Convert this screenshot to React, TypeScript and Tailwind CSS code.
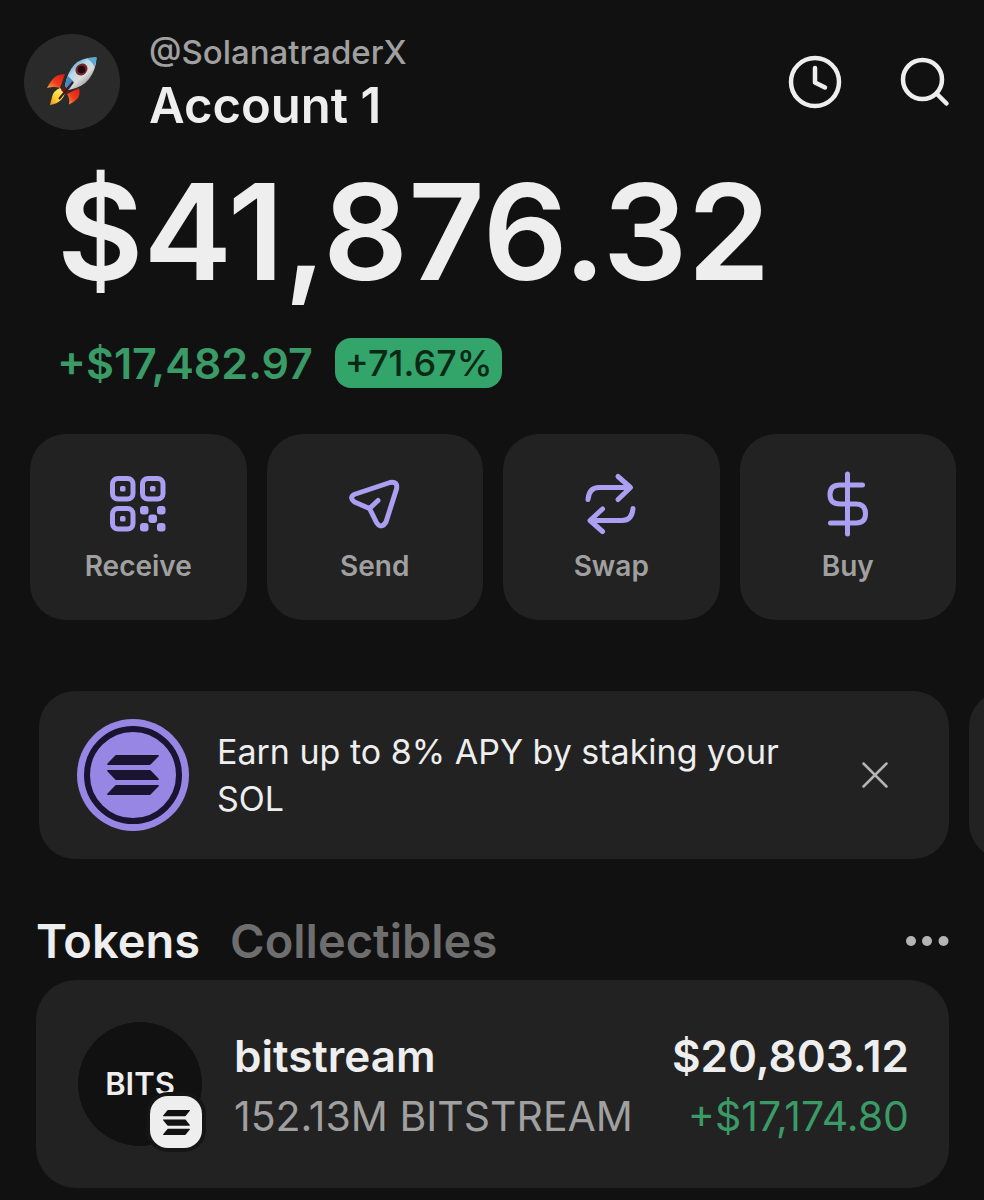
import { useState, type ReactNode } from "react";

function SolanaMark({ className }: { className?: string }) {
  return (
    <svg viewBox="0 0 52 40" preserveAspectRatio="none" className={className} fill="currentColor" aria-hidden="true">
      <path d="M9.500 0H51.200a.7.7 0 0 1 .5 1.200L43.800 9.300a2 2 0 0 1-1.400.7H.8a.7.7 0 0 1-.5-1.200L8.200.6A2 2 0 0 1 9.500 0Z" />
      <path d="M.8 15H42.500a2 2 0 0 1 1.300.6l7.900 8.200a.7.7 0 0 1-.5 1.200H9.500a2 2 0 0 1-1.300-.6L.3 16.200a.7.7 0 0 1 .5-1.200Z" />
      <path d="M9.500 30H51.200a.7.7 0 0 1 .5 1.200L43.800 39.300a2 2 0 0 1-1.400.7H.8a.7.7 0 0 1-.5-1.200L8.200 30.600A2 2 0 0 1 9.500 30Z" />
    </svg>
  );
}

function Rocket() {
  return (
    <svg viewBox="0 0 50 50" className="size-[50px]" aria-hidden="true">
      <defs>
        <linearGradient id="hull" x1="0.15" y1="0.15" x2="0.75" y2="0.85">
          <stop offset="0" stopColor="#3f8fc4" />
          <stop offset="0.35" stopColor="#b9d9ea" />
          <stop offset="0.65" stopColor="#dcdcda" />
          <stop offset="1" stopColor="#8b8f98" />
        </linearGradient>
        <linearGradient id="fin" x1="1" y1="0" x2="0" y2="1">
          <stop offset="0" stopColor="#d81c12" />
          <stop offset="0.55" stopColor="#ee3a1c" />
          <stop offset="1" stopColor="#f7a63c" />
        </linearGradient>
        <linearGradient id="flame" x1="1" y1="0" x2="0" y2="1">
          <stop offset="0" stopColor="#fff08a" />
          <stop offset="0.6" stopColor="#f9d231" />
          <stop offset="1" stopColor="#f08c22" />
        </linearGradient>
      </defs>
      <path d="M18 17 Q9 17 5 23 Q2 27 0 31 Q7 29 13 31 Z" fill="url(#fin)" />
      <path d="M32 31 Q34 38 30 42 Q26 46 22 47.500 Q23 41 20 37 Z" fill="url(#fin)" />
      <path d="M13 31 Q6 34 5 40 L3 48 Q10 47 14 43 Q17 40 18 36 Z" fill="url(#flame)" />
      <path d="M17 29 L23 34 L19 38 L14 33 Z" fill="#5a1f1c" />
      <path d="M49.500 0.500 Q34 0 27 8 Q20 16 18 29 L22 33 Q36 30 42 22 Q49 13 49.500 0.500 Z" fill="url(#hull)" />
      <path d="M49.500 0.500 Q44 0 39.500 1.500 Q45 4 47.500 10 Q49.500 5 49.500 0.500 Z" fill="#5aa9d6" />
      <path d="M18 29 Q18.500 24 21 19 L27 25 L22 33 Z" fill="#3d8cc9" />
      <ellipse cx="34.500" cy="12.500" rx="6.500" ry="5.500" transform="rotate(-45 34.500 12.500)" fill="#7d2229" />
      <circle cx="34.500" cy="12.500" r="3.800" fill="#1d0d10" />
      <path d="M26 25 L12 42" stroke="#4a1512" strokeWidth="2" />
    </svg>
  );
}

function ClockIcon() {
  return (
    <svg viewBox="0 0 54 54" className="size-[54px]" fill="none" stroke="currentColor" strokeWidth="4.500" strokeLinecap="round" strokeLinejoin="round" aria-hidden="true">
      <circle cx="27" cy="27" r="24" />
      <path d="M27 13v14.500l10 5" />
    </svg>
  );
}

function SearchIcon() {
  return (
    <svg viewBox="0 0 50 50" className="size-[50px]" fill="none" stroke="currentColor" strokeWidth="4.500" strokeLinecap="round" aria-hidden="true">
      <circle cx="22.500" cy="22.500" r="19.500" />
      <path d="M36.500 36.500l10 10" />
    </svg>
  );
}

function QrIcon() {
  return (
    <svg viewBox="0 0 68 68" className="size-[68px]" fill="currentColor" aria-hidden="true">
      {[[8.500, 8.500], [38.500, 8.500], [8.500, 38.500]].map(([x, y]) => (
        <g key={`${x}-${y}`}>
          <rect x={x} y={y} width="20.500" height="20.500" rx="5.500" fill="none" stroke="currentColor" strokeWidth="5" />
          <rect x={x + 7.500} y={y + 7.500} width="5.500" height="5.500" rx="1.500" />
        </g>
      ))}
      {[[36, 36], [53, 36], [44.500, 44.500], [36, 53], [53, 53]].map(([x, y]) => (
        <rect key={`${x}-${y}`} x={x} y={y} width="8.500" height="8.500" rx="3" />
      ))}
    </svg>
  );
}

function LineIcon({ children }: { children: ReactNode }) {
  return (
    <svg viewBox="0 0 68 68" className="size-[68px]" fill="none" stroke="currentColor" strokeWidth="5" strokeLinecap="round" strokeLinejoin="round" aria-hidden="true">
      {children}
    </svg>
  );
}

const actions = [
  { label: "Receive", icon: <QrIcon /> },
  {
    label: "Send",
    icon: (
      <LineIcon>
        <path d="M13 24.500L49 12.500Q57 11 55.500 19L45 52Q40 59.500 35.500 52.500L28.500 38.500L13.500 32Q8 28 13 24.500ZM28.500 38.500L37 30.500" />
      </LineIcon>
    ),
  },
  {
    label: "Swap",
    icon: (
      <LineIcon>
        <path d="M11 29.500Q12 17.500 22 17.500H53M41 6.500L53.500 17.500L41 29.500" />
        <path d="M56 38.500Q55 50.500 45 50.500H13.500M25.500 39L13 50.500L25.500 61.500" />
      </LineIcon>
    ),
  },
  {
    label: "Buy",
    icon: (
      <LineIcon>
        <path d="M33.500 4V64M48.500 15H26Q16 15 16 24.500T26 34H42Q51.500 34 51.500 43.500T42 53H16.500" />
      </LineIcon>
    ),
  },
];

const tabs = ["Tokens", "Collectibles"];

export default function App() {
  const [tab, setTab] = useState("Tokens");

  return (
    <div className="min-h-screen bg-[#111111] text-[#eeeeee] font-['Inter',sans-serif] overflow-hidden pb-3">
      <header className="flex items-center pt-7 pl-6 pr-[34px]">
        <div className="size-24 rounded-full bg-[#2a2a2a] flex items-center justify-center shrink-0">
          <Rocket />
        </div>
        <div className="ml-[29px] flex-1 min-w-0">
          <div className="text-[33px] leading-12 font-medium text-[#a0a0a0]">@SolanatraderX</div>
          <h1 className="text-[49px] leading-15 font-semibold">Account 1</h1>
        </div>
        <div className="flex items-center gap-[58px]">
          <button type="button" aria-label="Recent activity"><ClockIcon /></button>
          <button type="button" aria-label="Search"><SearchIcon /></button>
        </div>
      </header>

      {/* Balance */}
      <section className="pl-[57px] mt-4">
        <div className="text-[133px] leading-[160px] font-semibold">$41,876.32</div>
        <div className="flex items-center gap-[22px] mt-[26px]">
          <span className="text-[43px] leading-[50px] font-semibold text-[#3a9b67]">+$17,482.97</span>
          <span className="text-[36px] leading-[50px] font-medium px-2.5 rounded-2xl bg-[#33a46a] text-[#0b2817]">+71.67%</span>
        </div>
      </section>

      <nav className="grid grid-cols-4 gap-5 mt-[46px] pl-[30px] pr-7">
        {actions.map((a) => (
          <button key={a.label} type="button" className="bg-[#222222] rounded-[36px] pt-9 pb-[34px] flex flex-col items-center gap-2">
            <span className="text-[#ab9ff2]">{a.icon}</span>
            <span className="text-[28px] leading-10 font-semibold text-[#a0a0a0]">{a.label}</span>
          </button>
        ))}
      </nav>

      {/* Promo carousel */}
      <section className="mt-[71px] flex gap-5 overflow-hidden pl-[39px] pr-[35px]">
        <div className="w-full shrink-0 bg-[#222222] rounded-[36px] py-7 pl-[38px] pr-[54px] flex items-center">
          <div className="size-28 shrink-0 rounded-full bg-[#9886e5] flex items-center justify-center">
            <div className="size-[98px] rounded-full bg-[#9886e5] border-6 border-[#1a1430] flex items-center justify-center text-[#1a1430]">
              <SolanaMark className="w-[52px] h-10" />
            </div>
          </div>
          <p className="flex-1 ml-7 mr-12 text-[34px] leading-[47px]">Earn up to 8% APY by staking your SOL</p>
          <button type="button" aria-label="Dismiss" className="text-[#b4b4b4] p-1.5">
            <svg viewBox="0 0 28 28" className="size-7" fill="none" stroke="currentColor" strokeWidth="2.500" strokeLinecap="round" aria-hidden="true">
              <path d="M2.500 2.500l23 23M25.500 2.500l-23 23" />
            </svg>
          </button>
        </div>
        <div className="w-full shrink-0 bg-[#222222] rounded-[36px]" aria-hidden="true" />
      </section>

      <div className="mt-[51px] pl-9 pr-[35px] flex items-center">
        <div role="tablist" className="flex gap-[30px] flex-1">
          {tabs.map((t) => (
            <button
              key={t}
              type="button"
              role="tab"
              aria-selected={tab === t}
              onClick={() => setTab(t)}
              className={`text-[47px] leading-[62px] font-semibold ${tab === t ? "text-[#eeeeee]" : "text-[#6e6e6e]"}`}
            >
              {t}
            </button>
          ))}
        </div>
        <button type="button" aria-label="More options" className="text-[#b4b4b4]">
          <svg viewBox="0 0 44 12" className="w-11 h-3" fill="currentColor" aria-hidden="true">
            <circle cx="6" cy="6" r="5" />
            <circle cx="22" cy="6" r="5" />
            <circle cx="38.500" cy="6" r="5" />
          </svg>
        </button>
      </div>

      <ul className="mt-2 pl-9 pr-[35px]">
        <li className="bg-[#222222] rounded-[40px] py-[42px] pl-[42px] pr-10 flex items-center">
          <div className="relative size-[124px] shrink-0 rounded-full bg-[#111111] flex items-center justify-center">
            <span className="text-[31px] leading-9 font-semibold">BITS</span>
            <span className="absolute -right-1 -bottom-1.5 p-1 rounded-[22px] bg-[#151515]">
              <span className="size-[52px] rounded-[18px] bg-[#eeeeee] text-[#111111] flex items-center justify-center">
                <SolanaMark className="w-[27px] h-[25px]" />
              </span>
            </span>
          </div>
          <div className="ml-8 pt-1 flex-1 min-w-0">
            <div className="text-[44px] leading-15 font-semibold">bitstream</div>
            <div className="text-[41px] leading-15 text-[#a0a0a0]">152.13M BITSTREAM</div>
          </div>
          <div className="pt-1 text-right">
            <div className="text-[44px] leading-15 font-semibold">$20,803.12</div>
            <div className="text-[41px] leading-15 text-[#3a9b67]">+$17,174.80</div>
          </div>
        </li>
      </ul>
    </div>
  );
}
